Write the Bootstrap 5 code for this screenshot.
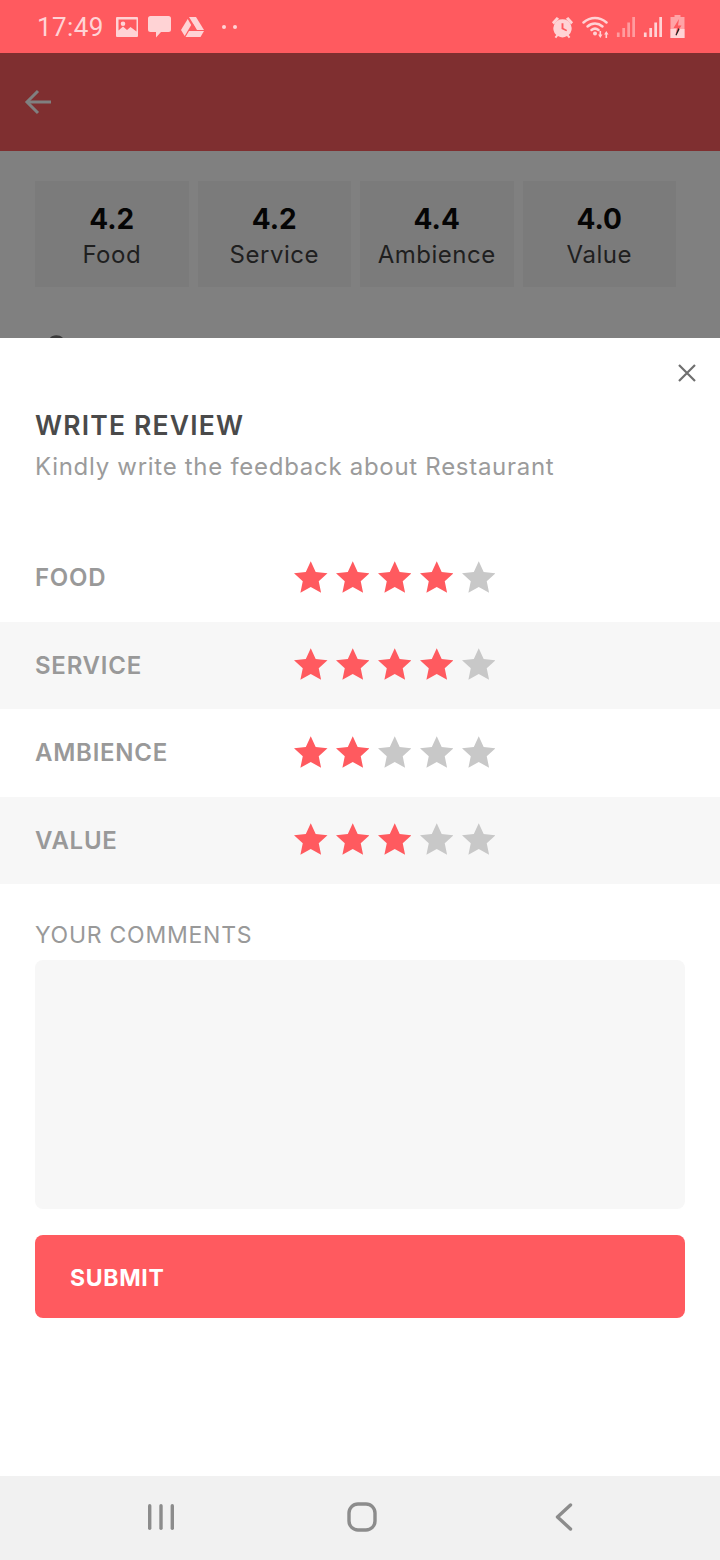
<!DOCTYPE html>
<html lang="en">
<head>
<meta charset="UTF-8">
<title>Write Review</title>
<link rel="stylesheet" href="https://cdn.jsdelivr.net/npm/bootstrap@5.3.0/dist/css/bootstrap.min.css">
<style>
html, body { margin: 0; height: 1560px; overflow: hidden; }
body { font-family: Inter, "Liberation Sans", sans-serif; background: #fff; width: 720px; }
.screen { height: 1560px; }
.status-strip { height: 53px; background: #ff5a5f; color: #ffd3d5; padding: 0 35px 0 37px; }
.status-time { font-family: Roboto, sans-serif; font-size: 26px; line-height: 1; letter-spacing: .4px; width: 65px; margin-right: 14px; }
.status-strip svg { display: block; fill: #ffd3d5; }
.notif-icons { gap: 10px; }
.notif-dots { margin-left: 8px; }
.sys-icons { gap: 8px; }
.sys-signal-dim { margin-left: -1px; }
.app-head { height: 98px; background: #7f2f30; padding-left: 24px; }
.dim-area { height: 187px; background: #808080; padding: 30px 44px 0 35px; position: relative; }
.score-row { gap: 9px; }
.score-tile { flex: 1 1 0; height: 106px; background: #7b7b7b; text-align: center; padding-top: 20px; }
.score-num { font-size: 28px; font-weight: 700; line-height: 36px; color: #050505; }
.score-name { font-size: 24px; line-height: 36px; color: #1f1f1f; letter-spacing: .5px; }
.dim-arc { position: absolute; left: 47px; bottom: 0; }
.sheet { height: 1138px; background: #fff; }
.close-line { height: 62px; padding: 24px 22px 0 0; }
.sheet-title { font-size: 26.5px; font-weight: 600; line-height: 36px; color: #4a4a4a; margin: 7px 0 0 35px; letter-spacing: 1.2px; }
.sheet-sub { font-size: 24px; line-height: 32px; color: #9b9b9b; margin: 8px 0 51px 35px; letter-spacing: .71px; }
.rate-row { height: 87.5px; padding-left: 35px; }
.rate-row:nth-child(even) { background: #f7f7f7; }
.rate-label { width: 259px; font-size: 24px; font-weight: 600; color: #999; letter-spacing: .75px; padding-top: 1px; }
.star-set { gap: 8.4px; margin-bottom: 2px; }
.star-set svg { display: block; fill: #c8c8c8; }
.star-set svg.on { fill: #ff5a5f; }
.form-wrap { padding: 33px 35px 0; }
.comment-label { font-size: 23px; line-height: 36px; color: #999; margin-bottom: 7px; letter-spacing: .75px; }
.comment-box { height: 249px; background: #f7f7f7; border: 0; border-radius: 8px; resize: none; }
.send-btn { height: 83px; margin-top: 26px; background: #ff5a5f; color: #fff; border: 0; border-radius: 8px; font-size: 23px; font-weight: 700; text-align: left; padding: 3px 0 0 35px; letter-spacing: .7px; }
.send-btn:hover { background: #ff5a5f; color: #fff; }
.soft-nav { height: 84px; background: #f1f1f1; padding: 0 0 2px 147px; }
.nav-home { margin-left: 172px; }
.nav-back { margin-left: 178px; }
</style>
</head>
<body>
<div class="screen d-flex flex-column">

  <div class="status-strip d-flex align-items-center">
    <span class="status-time">17:49</span>
    <div class="notif-icons d-flex align-items-center">
      <svg width="22" height="20" viewBox="0 0 22 20"><path fill-rule="evenodd" d="M1 0h20a1 1 0 0 1 1 1v18a1 1 0 0 1-1 1H1a1 1 0 0 1-1-1V1a1 1 0 0 1 1-1zm1.500 2.500v11l4.500-4 4 3.500 3.500-3 6 4.500V2.500zM7 4.500a2.300 2.300 0 1 1 0 4.600 2.300 2.300 0 0 1 0-4.600z"/></svg>
      <svg width="23" height="22" viewBox="0 0 23 22"><path d="M2.500 0h18A2.500 2.500 0 0 1 23 2.500v11a2.500 2.500 0 0 1-2.500 2.500H13l-5 5.500V16H2.500A2.500 2.500 0 0 1 0 13.500v-11A2.500 2.500 0 0 1 2.500 0z"/></svg>
      <svg width="23" height="20" viewBox="0 0 23 20"><path d="M8 0h7l8 13h-7z"/><path d="M6.700 2 10.200 8 3.700 19 0 13z"/><path d="M8 14h15l-3.500 6H4.500z"/><path d="M10.500 9.500 12 7l3 5h-6z" fill="#ff5a5f"/></svg>
      <svg class="notif-dots" width="15" height="6" viewBox="0 0 15 6"><circle cx="2" cy="3" r="2"/><circle cx="13" cy="3" r="2"/></svg>
    </div>
    <div class="sys-icons d-flex align-items-center ms-auto">
      <svg width="23" height="24" viewBox="0 0 24 24"><path d="M1 7 6 1.500l2.500 2L3 9.500zM23 7 18 1.500l-2.500 2L21 9.500z"/><path fill-rule="evenodd" d="M12 4a9.500 9.500 0 0 1 6.500 16.400l1.700 2-1.600 1.300-1.900-2.200a9.500 9.500 0 0 1-9.400 0l-1.900 2.200-1.600-1.300 1.700-2A9.500 9.500 0 0 1 12 4zm-1 4v6l5 2.500.8-1.500-3.800-2V8z"/></svg>
      <svg width="27" height="24" viewBox="0 0 27 24"><g fill="none" stroke="#ffd3d5" stroke-width="2.500" stroke-linecap="round"><path d="M1.500 7.500c7-6 16-6 23 0"/><path d="M5.500 11.500c4.500-4 10.500-4 15 0"/><path d="M9.500 15c2.200-1.700 4.800-1.700 7 0"/></g><circle cx="13" cy="18.500" r="2"/><path d="M17.500 16h1.600v3.500h1.400L18.300 23l-2.200-3.500h1.400zM23.500 23h1.600v-3.500h1.400L24.300 16l-2.200 3.500h1.400z"/></svg>
      <svg class="sys-signal-dim" width="19" height="22" viewBox="0 0 21 22" opacity=".55"><path d="M1 17h3v5H1zM7 12h3v10H7zM12.500 6h3v16h-3zM18 0h3v22h-3z"/></svg>
      <svg width="19" height="22" viewBox="0 0 21 22"><path d="M1 17h3v5H1zM7 12h3v10H7zM12.500 6h3v16h-3zM18 0h3v22h-3z"/></svg>
      <svg width="15" height="23" viewBox="0 0 14 23"><path d="M4 0h6v2h4v21H0V2h4z" opacity=".6"/><path d="M0 14h14v9H0z"/><path d="M8.500 4 3 13h3.500L5 20l6-9.500H7.500z" fill="#ff5a5f"/><path d="M8 13 5 20l1 .5 3-6z" fill="#222"/></svg>
    </div>
  </div>

  <div class="app-head d-flex align-items-center">
    <svg width="28" height="26" viewBox="0 0 28 26" fill="none" stroke="#808080" stroke-width="3"><path d="M27 13H3"/><path d="M14 2 3 13l11 11"/></svg>
  </div>

  <div class="dim-area">
    <div class="score-row d-flex">
      <div class="score-tile"><div class="score-num">4.2</div><div class="score-name">Food</div></div>
      <div class="score-tile"><div class="score-num">4.2</div><div class="score-name">Service</div></div>
      <div class="score-tile"><div class="score-num">4.4</div><div class="score-name">Ambience</div></div>
      <div class="score-tile"><div class="score-num">4.0</div><div class="score-name">Value</div></div>
    </div>
    <svg class="dim-arc" width="20" height="4" viewBox="0 0 20 4"><path d="M3 4C5 1 12 0 16 4z" fill="#3a3a3a"/></svg>
  </div>

  <div class="sheet">
    <div class="close-line d-flex justify-content-end">
      <svg width="22" height="22" viewBox="0 0 22 22" stroke="#6f6f6f" stroke-width="2.200"><path d="M3 3l16 16M19 3 3 19"/></svg>
    </div>
    <div class="sheet-title">WRITE REVIEW</div>
    <div class="sheet-sub">Kindly write the feedback about Restaurant</div>

    <div id="rateRows"></div>

    <form class="form-wrap">
      <label class="comment-label d-block" for="comments">YOUR COMMENTS</label>
      <textarea class="form-control comment-box" id="comments"></textarea>
      <button type="button" class="btn w-100 d-block send-btn">SUBMIT</button>
    </form>
  </div>

  <div class="soft-nav d-flex align-items-center">
    <svg width="28" height="28" viewBox="0 0 28 28" fill="#8c8c8c"><rect x="1" y="1" width="3.400" height="26" rx="1.700"/><rect x="12.300" y="1" width="3.400" height="26" rx="1.700"/><rect x="23.600" y="1" width="3.400" height="26" rx="1.700"/></svg>
    <svg class="nav-home" width="30" height="30" viewBox="0 0 30 30" fill="none" stroke="#8c8c8c" stroke-width="3.400"><rect x="2" y="2" width="26" height="26" rx="9"/></svg>
    <svg class="nav-back" width="18" height="28" viewBox="0 0 18 28" fill="none" stroke="#8c8c8c" stroke-width="3.400" stroke-linecap="round" stroke-linejoin="round"><path d="M15.500 2 2.500 14l13 12"/></svg>
  </div>
</div>

<script>
// rating rows, stars filled by score
var rows = [['FOOD', 4], ['SERVICE', 4], ['AMBIENCE', 2], ['VALUE', 3]];
var starPath = 'M17 0l5 10.800 12 1.400-8.900 8.100 2.400 11.700L17 26.200 6.500 32l2.400-11.700L0 12.200l12-1.400z';
var html = '';
rows.forEach(function (r) {
    var stars = '';
    for (var i = 1; i <= 5; i++) {
        stars += '<svg class="' + (i <= r[1] ? 'on' : '') + '" width="33.500" height="32" viewBox="0 0 34 32"><path d="' + starPath + '"/></svg>';
    }
    html += '<div class="rate-row d-flex align-items-center"><div class="rate-label">' + r[0] + '</div><div class="star-set d-flex">' + stars + '</div></div>';
});
document.getElementById('rateRows').innerHTML = html;
</script>
<script src="https://cdn.jsdelivr.net/npm/bootstrap@5.3.0/dist/js/bootstrap.bundle.min.js"></script>
</body>
</html>
